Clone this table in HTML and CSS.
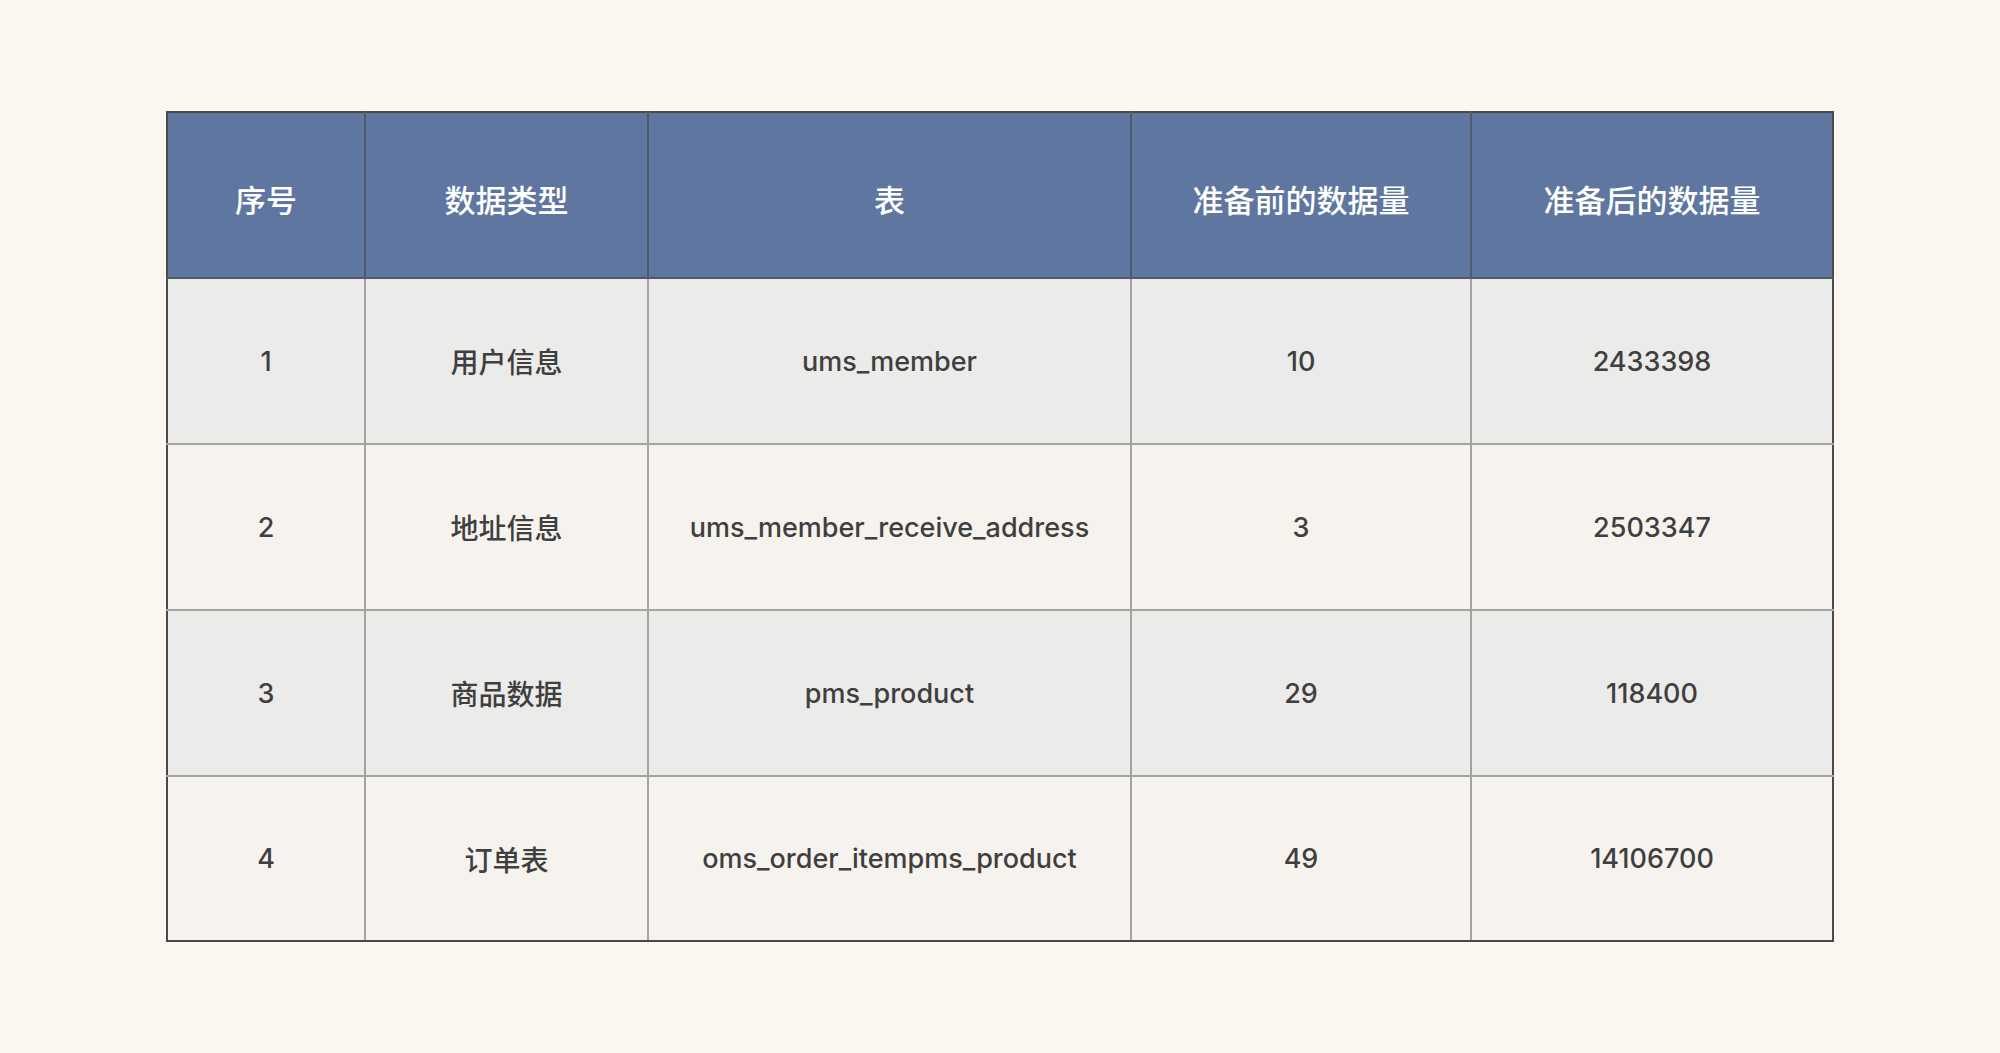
FILE: index.html
```html
<!DOCTYPE html>
<html lang="zh-CN">
<head>
<meta charset="utf-8">
<title>数据准备</title>
<link rel="stylesheet" href="styles.css">
</head>
<body>
<main class="page">
  <table class="data-table">
    <colgroup>
      <col class="c1"><col class="c2"><col class="c3"><col class="c4"><col class="c5">
    </colgroup>
    <thead>
      <tr>
        <th>序号</th>
        <th>数据类型</th>
        <th>表</th>
        <th>准备前的数据量</th>
        <th>准备后的数据量</th>
      </tr>
    </thead>
    <tbody>
      <tr class="odd">
        <td>1</td><td class="cjk">用户信息</td><td>ums_member</td><td>10</td><td>2433398</td>
      </tr>
      <tr class="even">
        <td>2</td><td class="cjk">地址信息</td><td>ums_member_receive_address</td><td>3</td><td>2503347</td>
      </tr>
      <tr class="odd">
        <td>3</td><td class="cjk">商品数据</td><td>pms_product</td><td>29</td><td>118400</td>
      </tr>
      <tr class="even">
        <td>4</td><td class="cjk">订单表</td><td>oms_order_itempms_product</td><td>49</td><td>14106700</td>
      </tr>
    </tbody>
  </table>
</main>
</body>
</html>
```
FILE: styles.css
```css
html, body {
  margin: 0;
  padding: 0;
  background: #fbf7f0;
}
.page {
  padding: 111px 0 0 166px;
}
.data-table {
  border-collapse: collapse;
  table-layout: fixed;
  width: 1666px;
  border: 2px solid #4a4a4a;
  font-family: Inter, "Noto Sans CJK SC", sans-serif;
}
.c1 { width: 198px; }
.c2 { width: 283px; }
.c3 { width: 483px; }
.c4 { width: 340px; }
.c5 { width: 362px; }
.data-table th {
  height: 157px;
  padding: 7px 0 0 0;
  background: #5f77a0;
  color: #ffffff;
  font-family: "Noto Sans CJK SC", sans-serif;
  font-size: 31px;
  font-weight: 500;
  text-align: center;
  border: 2px solid #4f5a6c;
}
.data-table thead th {
  border-top-color: #4a4a4a;
}
.data-table th:first-child { border-left-color: #4a4a4a; }
.data-table th:last-child { border-right-color: #4a4a4a; }
.data-table td {
  height: 164px;
  padding: 0;
  color: #3f3f3f;
  font-size: 27px;
  font-weight: 500;
  text-align: center;
  border: 2px solid #a3a3a1;
}
.data-table td.cjk {
  font-size: 28px;
}
.data-table tbody tr:first-child td {
  border-top-color: #6e7584;
}
.data-table tbody tr:last-child td {
  height: 163px;
  border-bottom-color: #4a4a4a;
}
.data-table td:first-child { border-left-color: #4a4a4a; }
.data-table td:last-child { border-right-color: #4a4a4a; }
.odd td { background: #ebebea; }
.even td { background: #f6f3ee; }
```
